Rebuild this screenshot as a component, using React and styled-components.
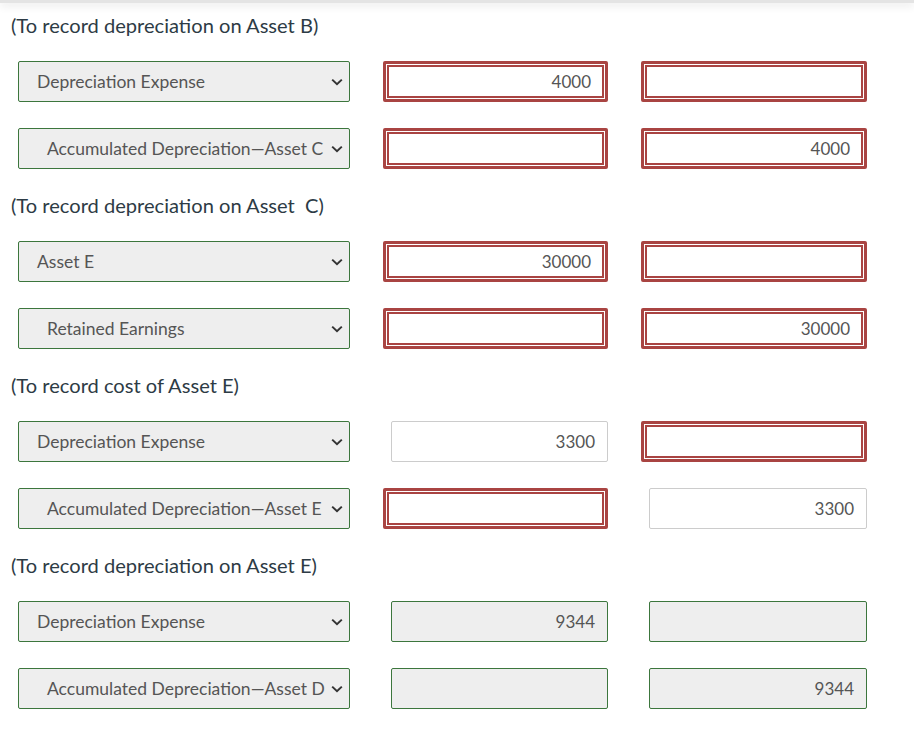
import React from 'react'
import styled, { createGlobalStyle } from 'styled-components'

const GlobalStyle = createGlobalStyle`
    body {
        margin: 0;
        background: #fff;
        font-family: Lato, "Open Sans", sans-serif;
    }
`

const Page = styled.div`
    width: 914px;
    min-height: 730px;
    background: #fff;
`

const TopShade = styled.div`
    height: 3px;
    background: #e4e4e4;
    box-shadow: 0 2px 9px rgba(0, 0, 0, 0.16);
`

const Entries = styled.div`
    padding-top: 7px;
`

const Section = styled.section`
    display: flex;
    flex-direction: column;
    gap: 26px;
    padding-bottom: 21px;
`

const Heading = styled.h4`
    margin: 0 0 -5px 11px;
    font-size: 20.1px;
    font-weight: 400;
    line-height: 30px;
    color: #2d3b45;
`

const Row = styled.div`
    display: grid;
    grid-template-columns: 332px 225px 226px;
    column-gap: 33px;
    margin-left: 18px;
    height: 41px;
`

const SelectBox = styled.div`
    display: flex;
    align-items: center;
    justify-content: space-between;
    box-sizing: border-box;
    height: 41px;
    padding: 0 6px 0 ${(p) => (p.$credit ? 28 : 18)}px;
    border: 1px solid #3c763d;
    border-radius: 2px;
    background: #eee;
    color: #555;
    font-size: 17.5px;
    white-space: nowrap;
`

const Cell = styled.div`
    display: flex;
    justify-content: flex-end;
`

const Field = styled.div`
    display: flex;
    align-items: center;
    justify-content: flex-end;
    box-sizing: border-box;
    height: 41px;
    width: ${(p) => (p.$state === 'error' ? '100%' : 'calc(100% - 8px)')};
    padding: 0 ${(p) => (p.$state === 'error' ? 14 : 12)}px 0 12px;
    border-radius: 2px;
    font-family: Lato, sans-serif;
    font-size: 17px;
    color: #555;
    background: ${(p) => (p.$state === 'locked' ? '#eee' : '#fff')};
    border: ${(p) =>
        p.$state === 'error'
            ? '3px solid #a94442'
            : p.$state === 'locked'
            ? '1px solid #3c763d'
            : '1px solid #ccc'};
    box-shadow: ${(p) =>
        p.$state === 'error'
            ? 'inset 0 0 0 1px #fff, inset 0 0 0 3px #a94442'
            : 'none'};
`

function Chevron() {
    return (
        <svg width="12" height="8" viewBox="0 0 12 8">
            <path
                d="M1.2 1.6 L6 6.2 L10.8 1.6"
                fill="none"
                stroke="#333"
                strokeWidth="2"
            />
        </svg>
    )
}

const sections = [
    {
        title: '(To record depreciation on Asset B)',
        rows: [
            { account: 'Depreciation Expense', debit: ['4000', 'error'], credit: ['', 'error'] },
            { account: 'Accumulated Depreciation\u2014Asset C', creditLine: true, debit: ['', 'error'], credit: ['4000', 'error'] },
        ],
    },
    {
        title: '(To record depreciation on Asset\u00a0 C)',
        rows: [
            { account: 'Asset E', debit: ['30000', 'error'], credit: ['', 'error'] },
            { account: 'Retained Earnings', creditLine: true, debit: ['', 'error'], credit: ['30000', 'error'] },
        ],
    },
    {
        title: '(To record cost of Asset E)',
        rows: [
            { account: 'Depreciation Expense', debit: ['3300', 'plain'], credit: ['', 'error'] },
            { account: 'Accumulated Depreciation\u2014Asset E', creditLine: true, debit: ['', 'error'], credit: ['3300', 'plain'] },
        ],
    },
    {
        title: '(To record depreciation on Asset E)',
        rows: [
            { account: 'Depreciation Expense', debit: ['9344', 'locked'], credit: ['', 'locked'] },
            { account: 'Accumulated Depreciation\u2014Asset D', creditLine: true, debit: ['', 'locked'], credit: ['9344', 'locked'] },
        ],
    },
]

export default function App() {
    return (
        <Page>
            <GlobalStyle />
            <TopShade />
            <Entries>
                {sections.map((s) => (
                    <Section key={s.title}>
                        <Heading>{s.title}</Heading>
                        {s.rows.map((r) => (
                            <Row key={r.account}>
                                <SelectBox $credit={r.creditLine}>
                                    <span>{r.account}</span>
                                    <Chevron />
                                </SelectBox>
                                <Cell>
                                    <Field $state={r.debit[1]}>{r.debit[0]}</Field>
                                </Cell>
                                <Cell>
                                    <Field $state={r.credit[1]}>{r.credit[0]}</Field>
                                </Cell>
                            </Row>
                        ))}
                    </Section>
                ))}
            </Entries>
        </Page>
    )
}
